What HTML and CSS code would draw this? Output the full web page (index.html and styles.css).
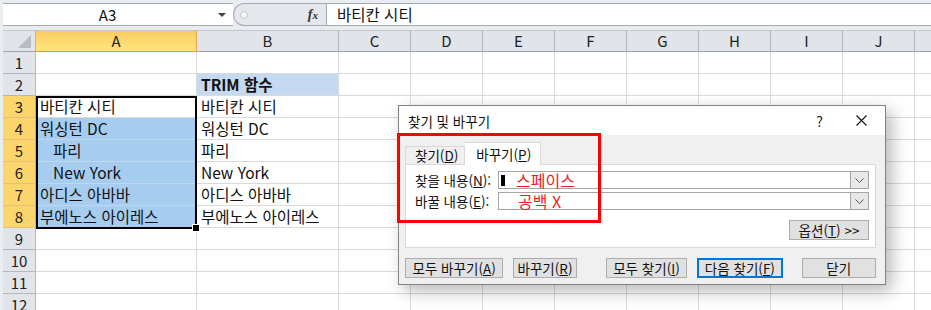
FILE: index.html
```html
<!DOCTYPE html>
<html lang="ko">
<head>
  <meta charset="UTF-8" />
  <title>찾기 및 바꾸기 - TRIM</title>
  <link rel="stylesheet" href="styles.css">
</head>
<body>
  <div class="app">

    <!-- formula bar -->
    <div class="formula-bar">
      <div class="name-box">
        <span class="name-text">A3</span>
        <span class="nb-arrow"></span>
      </div>
      <div class="grip">
        <span class="grip-dot"></span>
        <span class="fx">f<span class="fx-x">x</span></span>
      </div>
      <div class="formula-input">바티칸 시티</div>
    </div>

    <!-- sheet -->
    <div class="sheet">
      <div class="hd corner"><span class="corner-tri"></span></div>
      <div class="hd col sel-col">A</div>
      <div class="hd col">B</div>
      <div class="hd col">C</div>
      <div class="hd col">D</div>
      <div class="hd col">E</div>
      <div class="hd col">F</div>
      <div class="hd col">G</div>
      <div class="hd col">H</div>
      <div class="hd col">I</div>
      <div class="hd col">J</div>
      <div class="hd col"></div>

      <div class="hd row">1</div>
      <div class="cell"></div><div class="cell"></div><div class="cell"></div><div class="cell"></div><div class="cell"></div><div class="cell"></div><div class="cell"></div><div class="cell"></div><div class="cell"></div><div class="cell"></div><div class="cell"></div>

      <div class="hd row">2</div>
      <div class="cell"></div><div class="cell title-cell">TRIM 함수</div><div class="cell"></div><div class="cell"></div><div class="cell"></div><div class="cell"></div><div class="cell"></div><div class="cell"></div><div class="cell"></div><div class="cell"></div><div class="cell"></div>

      <div class="hd row sel-row">3</div>
      <div class="cell">바티칸 시티</div><div class="cell">바티칸 시티</div><div class="cell"></div><div class="cell"></div><div class="cell"></div><div class="cell"></div><div class="cell"></div><div class="cell"></div><div class="cell"></div><div class="cell"></div><div class="cell"></div>

      <div class="hd row sel-row">4</div>
      <div class="cell picked">워싱턴 DC</div><div class="cell">워싱턴 DC</div><div class="cell"></div><div class="cell"></div><div class="cell"></div><div class="cell"></div><div class="cell"></div><div class="cell"></div><div class="cell"></div><div class="cell"></div><div class="cell"></div>

      <div class="hd row sel-row">5</div>
      <div class="cell picked">   파리</div><div class="cell">파리</div><div class="cell"></div><div class="cell"></div><div class="cell"></div><div class="cell"></div><div class="cell"></div><div class="cell"></div><div class="cell"></div><div class="cell"></div><div class="cell"></div>

      <div class="hd row sel-row">6</div>
      <div class="cell picked">   New York</div><div class="cell">New York</div><div class="cell"></div><div class="cell"></div><div class="cell"></div><div class="cell"></div><div class="cell"></div><div class="cell"></div><div class="cell"></div><div class="cell"></div><div class="cell"></div>

      <div class="hd row sel-row">7</div>
      <div class="cell picked">아디스 아바바</div><div class="cell">아디스 아바바</div><div class="cell"></div><div class="cell"></div><div class="cell"></div><div class="cell"></div><div class="cell"></div><div class="cell"></div><div class="cell"></div><div class="cell"></div><div class="cell"></div>

      <div class="hd row sel-row">8</div>
      <div class="cell picked">부에노스 아이레스</div><div class="cell">부에노스 아이레스</div><div class="cell"></div><div class="cell"></div><div class="cell"></div><div class="cell"></div><div class="cell"></div><div class="cell"></div><div class="cell"></div><div class="cell"></div><div class="cell"></div>

      <div class="hd row">9</div>
      <div class="cell"></div><div class="cell"></div><div class="cell"></div><div class="cell"></div><div class="cell"></div><div class="cell"></div><div class="cell"></div><div class="cell"></div><div class="cell"></div><div class="cell"></div><div class="cell"></div>

      <div class="hd row">10</div>
      <div class="cell"></div><div class="cell"></div><div class="cell"></div><div class="cell"></div><div class="cell"></div><div class="cell"></div><div class="cell"></div><div class="cell"></div><div class="cell"></div><div class="cell"></div><div class="cell"></div>

      <div class="hd row">11</div>
      <div class="cell"></div><div class="cell"></div><div class="cell"></div><div class="cell"></div><div class="cell"></div><div class="cell"></div><div class="cell"></div><div class="cell"></div><div class="cell"></div><div class="cell"></div><div class="cell"></div>

      <div class="hd row">12</div>
      <div class="cell"></div><div class="cell"></div><div class="cell"></div><div class="cell"></div><div class="cell"></div><div class="cell"></div><div class="cell"></div><div class="cell"></div><div class="cell"></div><div class="cell"></div><div class="cell"></div>

      <!-- selection border A3:A8 -->
      <div class="selection"><span class="fill-handle"></span></div>
    </div>

    <!-- find & replace dialog -->
    <div class="dialog">
      <div class="dlg-title">
        <span class="dlg-name">찾기 및 바꾸기</span>
        <span class="dlg-help">?</span>
        <svg class="dlg-close" width="11" height="11" viewBox="0 0 11 11">
          <path d="M0.5 0.5 L10.5 10.5 M10.5 0.5 L0.5 10.5" stroke="#111" stroke-width="1.1" fill="none"/>
        </svg>
      </div>

      <div class="dlg-body">
        <div class="tabs">
          <div class="tab">찾기(<u>D</u>)</div>
          <div class="tab active">바꾸기(<u>P</u>)</div>
        </div>

        <div class="panel">
          <div class="field">
            <label>찾을 내용(<u>N</u>):</label>
            <div class="combo">
              <span class="combo-text"><span class="caret"></span>스페이스</span>
              <span class="combo-btn">
                <svg width="9" height="5" viewBox="0 0 9 5"><path d="M0.5 0.5 L4.5 4.5 L8.5 0.5" stroke="#555" fill="none"/></svg>
              </span>
            </div>
          </div>
          <div class="field">
            <label>바꿀 내용(<u>E</u>):</label>
            <div class="combo">
              <span class="combo-text pad">공백 X</span>
              <span class="combo-btn">
                <svg width="9" height="5" viewBox="0 0 9 5"><path d="M0.5 0.5 L4.5 4.5 L8.5 0.5" stroke="#555" fill="none"/></svg>
              </span>
            </div>
          </div>
          <div class="panel-foot">
            <button class="btn btn-options">옵션(<u>T</u>) &gt;&gt;</button>
          </div>
        </div>

        <div class="actions">
          <button class="btn w-all">모두 바꾸기(<u>A</u>)</button>
          <button class="btn w-one">바꾸기(<u>R</u>)</button>
          <button class="btn w-find-all">모두 찾기(<u>I</u>)</button>
          <button class="btn btn-default w-next">다음 찾기(<u>F</u>)</button>
          <button class="btn w-close">닫기</button>
        </div>
      </div>
    </div>

    <!-- red callout box -->
    <div class="callout"></div>
  </div>
</body>
</html>
```

FILE: styles.css
```css
body {
  margin: 0;
  overflow: hidden;
  background: #fff;
  font-family: "Noto Sans CJK KR", "Noto Sans", sans-serif;
  color: #111;
}

.app {
  position: relative;
  width: 931px;
  height: 310px;
  overflow: hidden;
}

/* ---------- formula bar ---------- */

.formula-bar {
  display: flex;
  height: 30px;
  box-sizing: border-box;
  padding: 3px 0 4px 3px;
  background: #e9ecf0;
}

.formula-bar > div {
  box-sizing: border-box;
  height: 23px;
  border-top: 1px solid #a7abb0;
  border-bottom: 1px solid #a7abb0;
}

.name-box {
  display: flex;
  align-items: center;
  width: 230px;
  background: #fff;
}

.name-text {
  flex: 1;
  text-align: center;
  font-size: 15px;
  padding-left: 4px;
}

.nb-arrow {
  width: 0;
  height: 0;
  margin: 0 7px 0 10px;
  border-left: 4px solid transparent;
  border-right: 4px solid transparent;
  border-top: 4px solid #444;
}

.grip {
  display: flex;
  align-items: center;
  justify-content: space-between;
  width: 93px;
  background: #e4e7eb;
  border-left: 1px solid #a7abb0;
  border-radius: 12px 0 0 12px;
}

.grip-dot {
  width: 6px;
  height: 6px;
  margin-left: 6px;
  border-radius: 50%;
  background: #f4f5f6;
  border: 1px solid #c3c7cc;
}

.fx {
  margin-right: 8px;
  font-family: "Liberation Serif", serif;
  font-style: italic;
  font-weight: bold;
  font-size: 14px;
  color: #333;
}

.fx-x {
  font-size: 11px;
}

.formula-input {
  flex: 1;
  background: #fff;
  border-left: 1px solid #a7abb0;
  padding-left: 10px;
  font-size: 15.5px;
  line-height: 21px;
}

/* ---------- sheet ---------- */

.sheet {
  position: relative;
  display: grid;
  grid-template-columns: 33px 161px 142px repeat(9, 72px);
  grid-auto-rows: 22px;
  padding-left: 3px;
  background: #e9ecf0;
}

.hd {
  box-sizing: border-box;
  background: #e1e5ea;
  border-right: 1px solid #b3b8be;
  border-bottom: 1px solid #b3b8be;
  font-size: 15px;
  line-height: 21px;
  color: #222;
  text-align: center;
}

.hd.col {
  border-top: 1px solid #c3c7cc;
  line-height: 20px;
  border-bottom-color: #9ea4ab;
}

.corner {
  position: relative;
  border-top: 1px solid #c3c7cc;
  border-bottom-color: #9ea4ab;
}

.corner-tri {
  position: absolute;
  right: 4px;
  bottom: 3px;
  width: 0;
  height: 0;
  border-left: 13px solid transparent;
  border-bottom: 13px solid #b9bdc2;
}

.hd.sel-col {
  background: linear-gradient(to bottom, #f9cc63, #ffe57d);
  border-right-color: #e4a84a;
  border-bottom-color: #e39a34;
}

.hd.sel-row {
  background: #fcd56d;
  border-right-color: #e9a23e;
  border-bottom-color: #e5c17a;
}

.cell {
  box-sizing: border-box;
  background: #fff;
  border-right: 1px solid #dadada;
  border-bottom: 1px solid #dadada;
  padding-left: 4px;
  font-size: 15.5px;
  line-height: 21px;
  white-space: pre;
  overflow: hidden;
}

.cell.picked {
  background: #a6cdf0;
  border-bottom-color: #c0d8ee;
}

.cell.title-cell {
  background: #c5d9f1;
  font-weight: bold;
}

.selection {
  position: absolute;
  left: 36px;
  top: 66px;
  width: 161px;
  height: 133px;
  box-sizing: border-box;
  border: 2px solid #000;
}

.fill-handle {
  position: absolute;
  right: -5px;
  bottom: -5px;
  width: 6px;
  height: 6px;
  background: #000;
  border: 1px solid #fff;
}

/* ---------- dialog ---------- */

.dialog {
  position: absolute;
  left: 398px;
  top: 105px;
  width: 488px;
  height: 180px;
  box-sizing: border-box;
  border: 1px solid #7f8287;
  background: #f0f0f0;
  box-shadow: 6px 6px 16px rgba(0, 0, 0, 0.28);
  font-size: 13.5px;
}

.dlg-title {
  display: flex;
  align-items: center;
  height: 29px;
  padding-left: 9px;
  background: #fff;
}

.dlg-name {
  flex: 1;
  font-size: 13.5px;
}

.dlg-help {
  margin-right: 33px;
  font-size: 14px;
}

.dlg-close {
  margin-right: 18px;
}

.dlg-body {
  padding: 7px 9px 0 6px;
}

.tabs {
  display: flex;
  align-items: flex-end;
  height: 22px;
}

.tab {
  box-sizing: border-box;
  height: 18px;
  padding: 0 6px 0 9px;
  border: 1px solid #d9d9d9;
  border-bottom: none;
  line-height: 16px;
  font-size: 13.5px;
}

.tab.active {
  height: 23px;
  margin-bottom: -1px;
  padding: 0 9px 0 11px;
  background: #fff;
  border-left: none;
  line-height: 22px;
  position: relative;
}

.panel {
  box-sizing: border-box;
  height: 84px;
  padding: 6px 6px 0 9px;
  background: #fff;
  border: 1px solid #d9d9d9;
}

.field {
  display: flex;
  align-items: center;
  height: 18px;
  margin-bottom: 3px;
}

.field label {
  width: 83px;
  font-size: 13.5px;
  line-height: 16px;
}

.combo {
  flex: 1;
  display: flex;
  height: 18px;
  box-sizing: border-box;
  border: 1px solid #a5a5a5;
}

.combo-text {
  flex: 1;
  display: flex;
  align-items: center;
  color: #ee1c1c;
  font-size: 16px;
  line-height: 15px;
}

.combo-text.pad {
  padding-left: 19px;
}

.caret {
  width: 4px;
  height: 11px;
  margin: 0 11px 0 2px;
  background: #000;
}

.combo-btn {
  display: flex;
  align-items: center;
  justify-content: center;
  width: 17px;
  background: #e8e8e8;
  border-left: 1px solid #a5a5a5;
}

.panel-foot {
  display: flex;
  justify-content: flex-end;
  margin-top: 10px;
}

.btn {
  box-sizing: border-box;
  height: 20px;
  padding: 0;
  background: #e1e1e1;
  border: 1px solid #adadad;
  font-family: inherit;
  font-size: 13.5px;
  color: #111;
  line-height: 17px;
}

.btn-options {
  width: 80px;
}

.btn-default {
  border: 2px solid #0078d7;
}

.actions {
  display: flex;
  margin-top: 10px;
}

.w-all { width: 99px; }
.w-one { width: 64px; margin-left: 10px; }
.w-find-all { width: 82px; margin-left: 29px; }
.w-next { width: 86px; margin-left: 10px; }
.w-close { width: 75px; margin-left: 19px; }

/* ---------- red callout ---------- */

.callout {
  position: absolute;
  left: 397px;
  top: 133px;
  width: 204px;
  height: 90px;
  box-sizing: border-box;
  border: 3px solid #ff0000;
}
```
